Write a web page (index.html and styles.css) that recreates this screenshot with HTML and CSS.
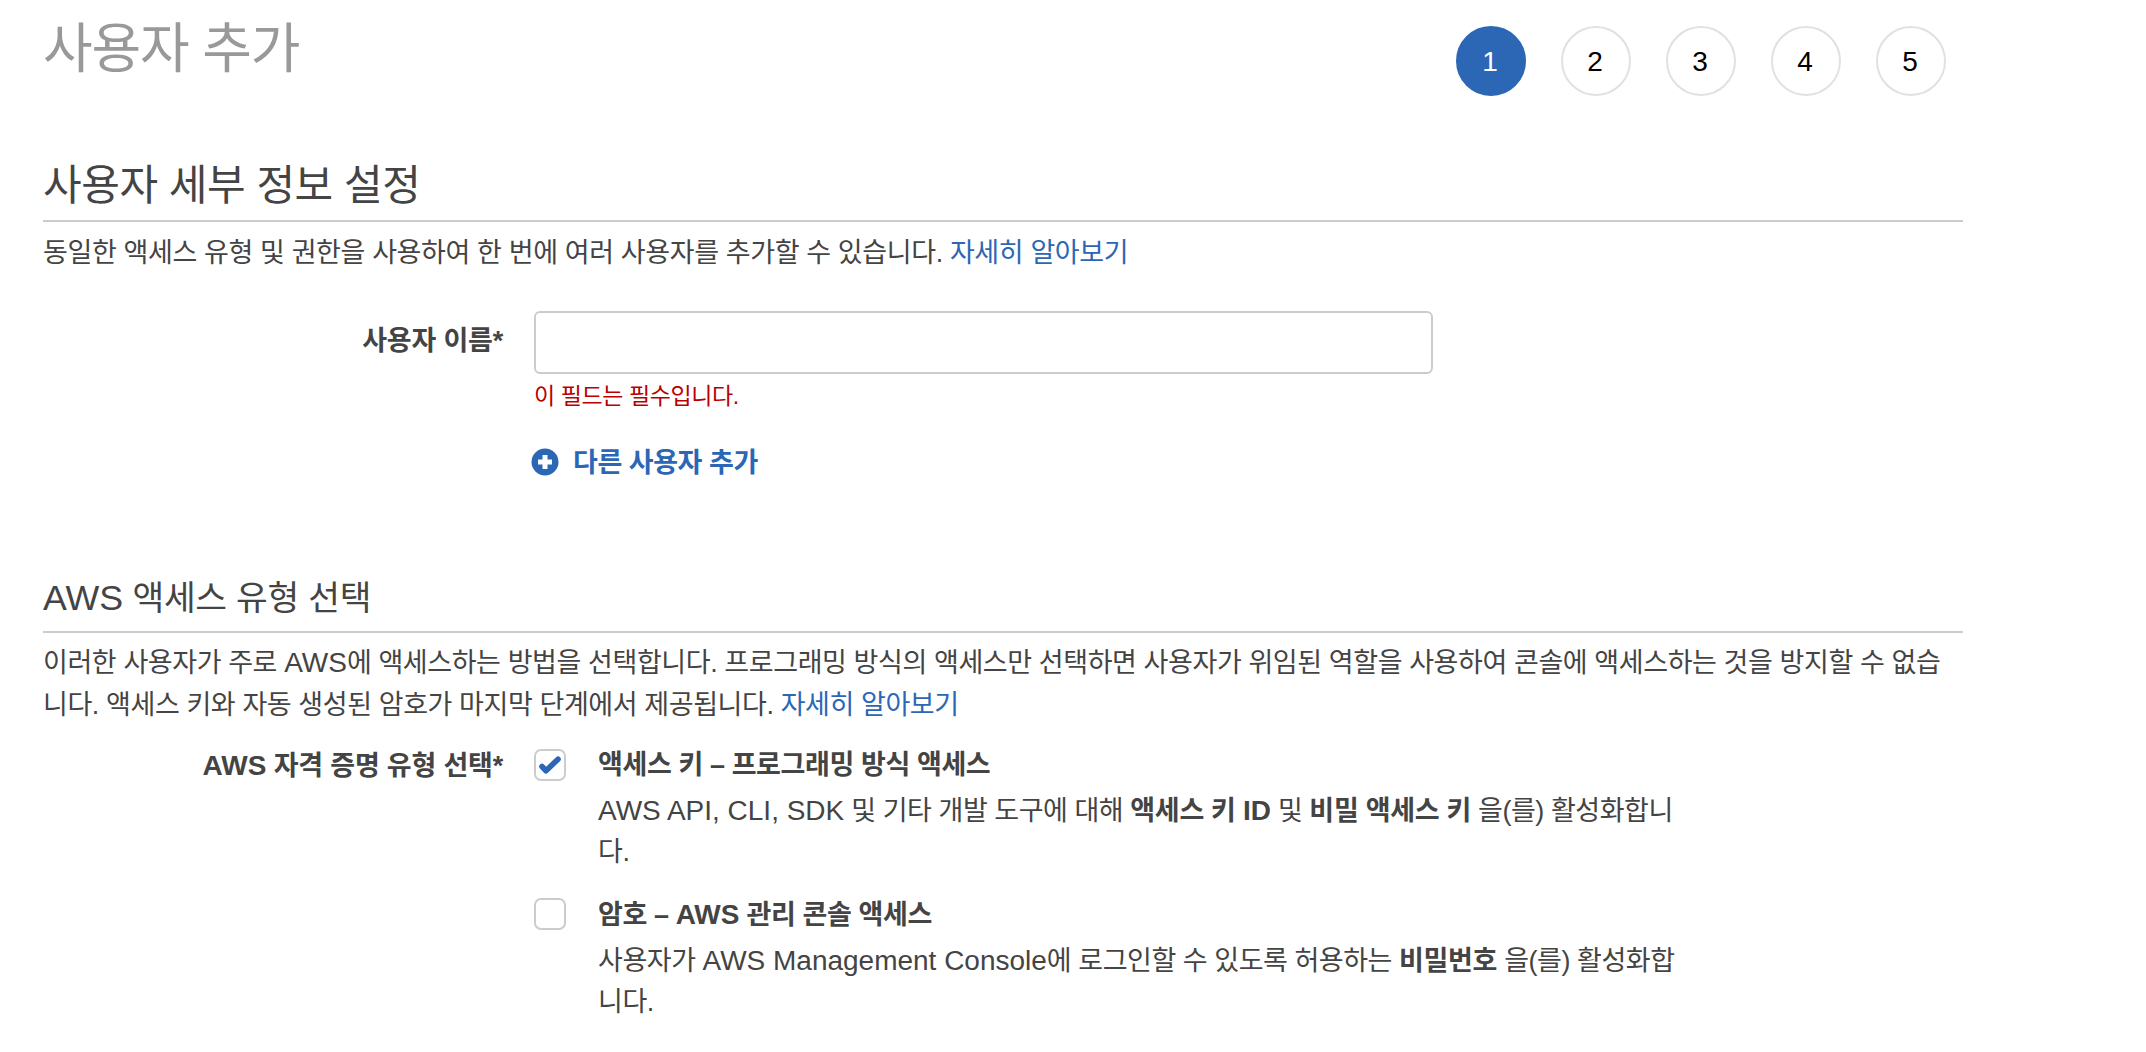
FILE: index.html
```html
<!DOCTYPE html>
<html lang="ko">
<head>
<meta charset="utf-8">
<title>사용자 추가</title>
<link rel="stylesheet" href="styles.css">
</head>
<body>
<main class="page">
  <header class="top">
    <h1 class="title">사용자 추가</h1>
    <ol class="steps">
      <li class="step step-on">1</li>
      <li class="step">2</li>
      <li class="step">3</li>
      <li class="step">4</li>
      <li class="step">5</li>
    </ol>
  </header>

  <section class="details">
    <h2 class="heading">사용자 세부 정보 설정</h2>
    <p class="intro">동일한 액세스 유형 및 권한을 사용하여 한 번에 여러 사용자를 추가할 수 있습니다. <a class="link" href="#">자세히 알아보기</a></p>
    <div class="row row-name">
      <label class="label label-name" for="username">사용자 이름*</label>
      <div class="field">
        <input class="input" id="username" type="text">
        <p class="error">이 필드는 필수입니다.</p>
        <a class="add" href="#">
          <svg class="add-icon" viewBox="0 0 28 28" aria-hidden="true"><circle cx="14" cy="14" r="13.5" fill="#2b67b5"/><path d="M14 7v14M7 14h14" stroke="#fff" stroke-width="5" fill="none"/></svg>
          <span>다른 사용자 추가</span>
        </a>
      </div>
    </div>
  </section>

  <section class="access">
    <h2 class="heading heading-aws"><span class="en">AWS</span> 액세스 유형 선택</h2>
    <p class="intro intro-aws">이러한 사용자가 주로 <span class="en">AWS</span>에 액세스하는 방법을 선택합니다. 프로그래밍 방식의 액세스만 선택하면 사용자가 위임된 역할을 사용하여 콘솔에 액세스하는 것을 방지할 수 없습니다. 액세스 키와 자동 생성된 암호가 마지막 단계에서 제공됩니다. <a class="link" href="#">자세히 알아보기</a></p>
    <div class="row row-type">
      <div class="label"><span class="en">AWS</span> 자격 증명 유형 선택*</div>
      <div class="options">
        <div class="option">
          <span class="check"><svg class="tick" viewBox="0 0 22 18" aria-hidden="true"><path d="M3 10.5l4 4.2L19 3.2" fill="none" stroke="#2b67b5" stroke-width="5.6" stroke-linecap="round" stroke-linejoin="round"/></svg></span>
          <div class="option-text">
            <div class="option-title">액세스 키 – 프로그래밍 방식 액세스</div>
            <div class="option-desc"><span class="en">AWS API, CLI, SDK</span> 및 기타 개발 도구에 대해 <b>액세스 키 <span class="en">ID</span></b> 및 <b>비밀 액세스 키</b> 을(를) 활성화합니다.</div>
          </div>
        </div>
        <div class="option">
          <span class="check"></span>
          <div class="option-text">
            <div class="option-title">암호 – <span class="en">AWS</span> 관리 콘솔 액세스</div>
            <div class="option-desc">사용자가 <span class="en">AWS Management Console</span>에 로그인할 수 있도록 허용하는 <b>비밀번호</b> 을(를) 활성화합니다.</div>
          </div>
        </div>
      </div>
    </div>
  </section>
</main>
</body>
</html>
```
FILE: styles.css
```css
* { box-sizing: border-box; }
html, body { margin: 0; background: #fff; }
body {
  font-family: "Liberation Sans", "Noto Sans CJK KR", sans-serif;
  font-size: 27px;
  line-height: 41px;
  letter-spacing: -0.38px;
  word-break: break-all;
  color: #444;
  overflow: hidden;
  height: 1052px;
}
.en { font-size: 1.037em; letter-spacing: 0; }
.page { width: 1963px; padding-left: 43px; }
.top { display: flex; justify-content: space-between; height: 134px; padding-top: 26px; padding-right: 17px; }
.title { margin: -12px 0 0; font-size: 54px; line-height: 70px; font-weight: 400; letter-spacing: -1.2px; color: #999; }
.steps { display: flex; gap: 35px; margin: 0; padding: 0; list-style: none; }
.step {
  width: 70px; height: 70px; padding-right: 2px; border: 2px solid #e1e1e1; border-radius: 50%;
  display: flex; align-items: center; justify-content: center;
  font-size: 28px; letter-spacing: 0; color: #000;
}
.step-on { background: #2b67b5; border-color: #2b67b5; color: #fff; }
.heading {
  margin: 0; height: 88px; padding-top: 27px; border-bottom: 2px solid #ccc;
  font-size: 42px; line-height: 50px; font-weight: 400; letter-spacing: -0.45px; color: #444;
}
.link { color: #2b67b5; text-decoration: none; }
.intro { margin: 0; padding-top: 11px; }
.row { display: flex; }
.label { width: 460px; text-align: right; font-weight: 700; flex: none; letter-spacing: -0.2px; }
.row-name { margin-top: 37px; }
.label-name { padding-top: 10px; }
.field { margin-left: 31px; width: 899px; }
.input { display: block; width: 100%; height: 63px; border: 2px solid #ccc; border-radius: 6px; background: #fff; }
.error { margin: 2px 0 0; font-size: 23px; line-height: 40px; letter-spacing: -0.4px; color: #b90000; }
.add { display: flex; align-items: center; gap: 14px; margin: 27px 0 0 -3px; font-weight: 700; letter-spacing: -0.45px; color: #2b67b5; text-decoration: none; }
.add-icon { width: 28px; height: 28px; margin-top: -3px; }
.access { margin-top: 73px; }
.heading-aws { height: 76px; padding-top: 16px; font-size: 34.5px; letter-spacing: -0.3px; }
.intro-aws { padding-top: 9px; width: 1905px; line-height: 42px; letter-spacing: -0.41px; }
.row-type { margin-top: 19px; }
.options { margin-left: 31px; }
.option { display: flex; gap: 32px; width: 1146px; margin-bottom: 21px; }
.option-text { width: 1082px; }
.option-title { font-weight: 700; margin-bottom: 4px; letter-spacing: -0.4px; }
.option-desc { letter-spacing: -0.46px; }
b { letter-spacing: -0.3px; }
.check { flex: none; width: 32px; height: 32px; margin-top: 4px; border: 2px solid #ccc; border-radius: 7px; display: flex; align-items: center; justify-content: center; }
.tick { width: 22px; height: 18px; }
```
